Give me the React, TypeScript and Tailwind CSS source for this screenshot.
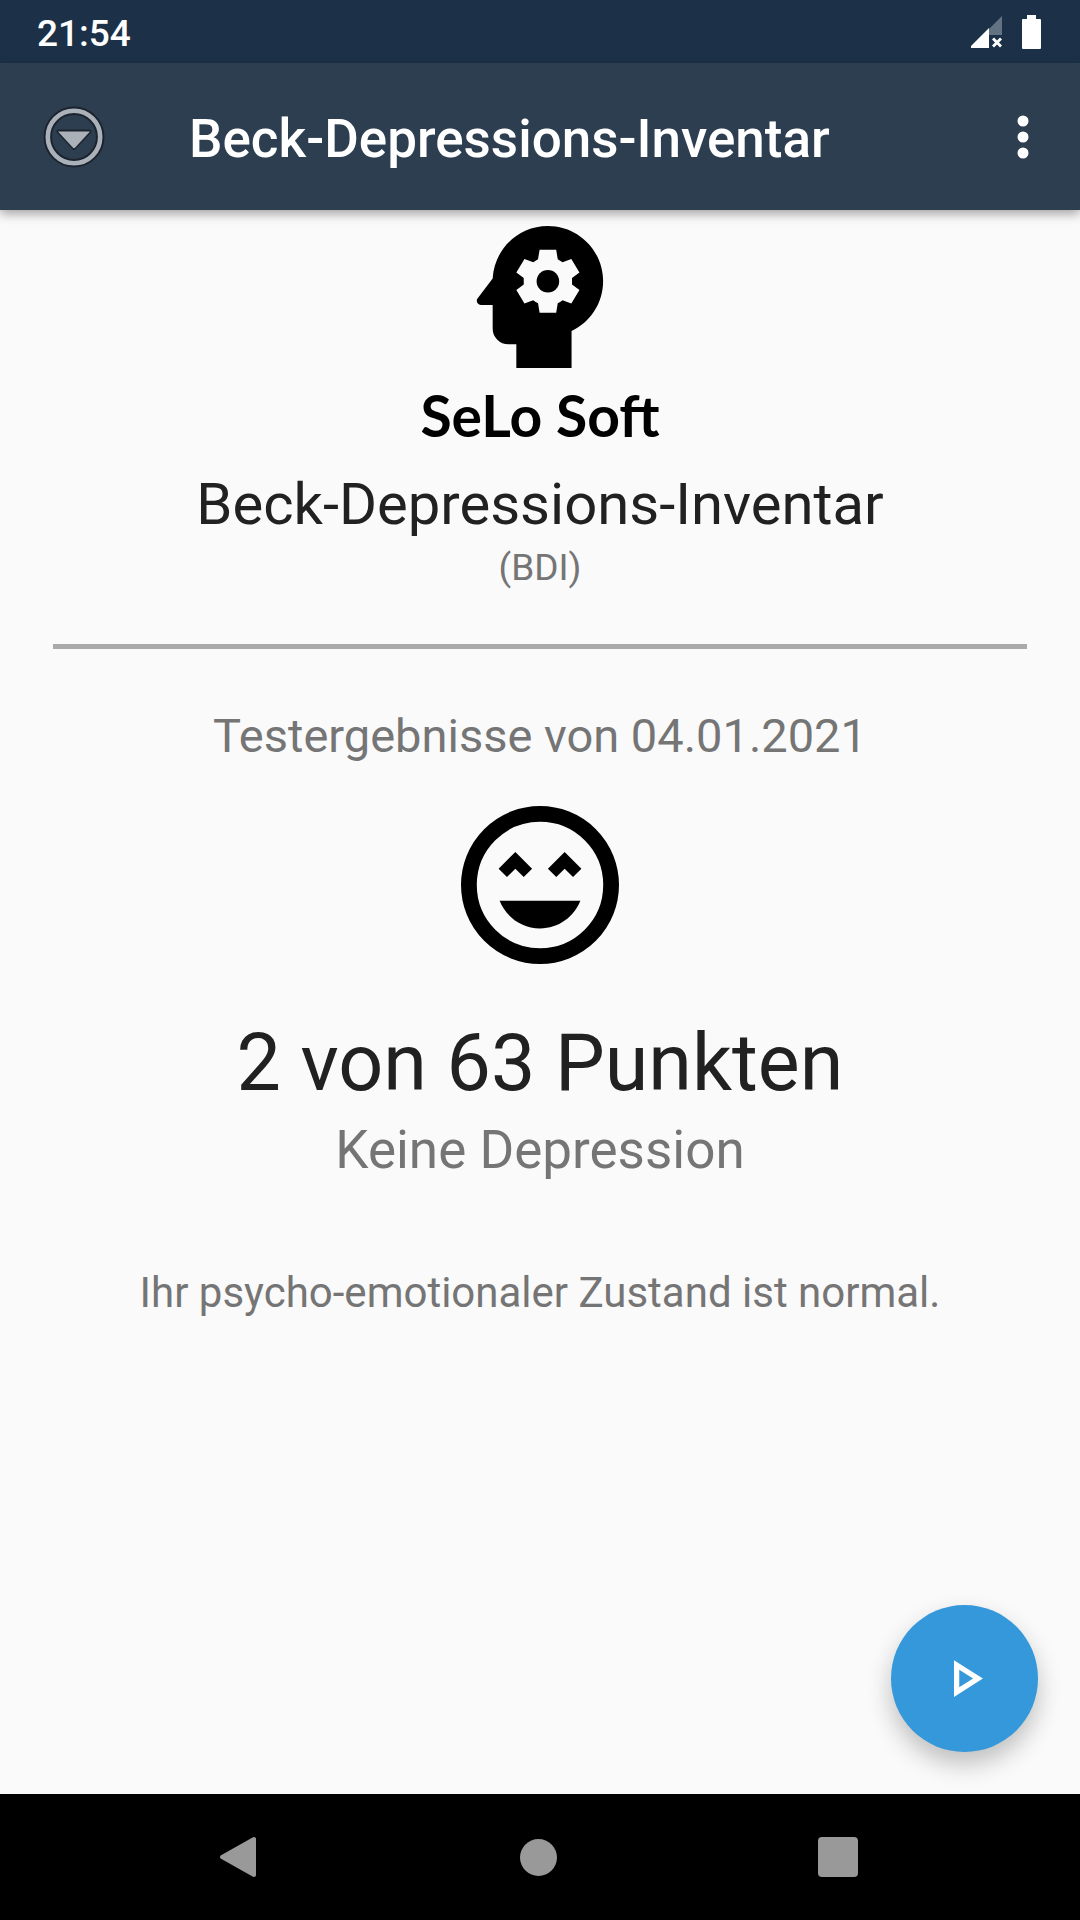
function SignalIcon() {
  return (
    <svg width="32" height="34" viewBox="0 0 32 34" aria-hidden="true">
      <path d="M31 1v19H12z" fill="#637282" />
      <path d="M18 13v20H0v-2z" fill="#fff" />
      <path d="M18 20h13v13H18z" fill="#1c3147" />
      <path
        d="M22 23.5l8 8M30 23.5l-8 8"
        stroke="#fff"
        strokeWidth="2.8"
        fill="none"
      />
    </svg>
  );
}

function BatteryIcon() {
  return (
    <svg width="19" height="34" viewBox="0 0 19 34" aria-hidden="true">
      <path
        d="M5 0h9v4h4q1 0 1 1v28q0 1-1 1H1q-1 0-1-1V5q0-1 1-1h4z"
        fill="#fff"
      />
    </svg>
  );
}

function DropIcon() {
  return (
    <svg width="64" height="64" viewBox="0 0 64 64" aria-hidden="true">
      <circle cx="32" cy="32" r="26.2" fill="none" stroke="#1b242e" strokeWidth="8.5" />
      <circle cx="32" cy="32" r="26.2" fill="none" stroke="#abb1b9" strokeWidth="4.6" />
      <path
        d="M16.5 26.5h31L32 43z"
        stroke="#1b242e"
        strokeWidth="4"
        strokeLinejoin="round"
      />
      <path d="M16 26.5h32L33 42.8q-1 .8-2 0z" fill="#abb1b9" />
    </svg>
  );
}

function HeadIcon() {
  return (
    <svg width="142" height="142" viewBox="3 3 18 18" aria-hidden="true">
      <path d="M13 3C9.23 3 6.19 5.95 6 9.66l-1.92 2.53c-.24.31 0 .81.42.81H6v3a2 2 0 0 0 2 2h1v3h7v-4.69c2.37-1.12 4-3.51 4-6.31 0-3.86-3.12-7-7-7" />
      <g transform="translate(13 10)">
        <path
          d="M-1.05-4H1.05L1.25-2.8Q1.55-2.65 1.86-2.4L2.97-2.83 4-1.12 3.06-.4V.4L4 1.12 2.97 2.83 1.86 2.4Q1.55 2.65 1.25 2.8L1.05 4H-1.05L-1.25 2.8Q-1.55 2.65-1.86 2.4L-2.97 2.83-4 1.12-3.06.4V-.4L-4-1.12-2.97-2.83-1.86-2.4Q-1.55-2.65-1.25-2.8z"
          fill="#fafafa"
        />
        <circle r="1.43" />
      </g>
    </svg>
  );
}

function SmileIcon() {
  return (
    <svg
      width="158"
      height="158"
      viewBox="2 2 20 20"
      role="img"
      aria-label="Keine Depression"
    >
      <circle cx="12" cy="12" r="9" fill="none" stroke="#000" strokeWidth="2" />
      <path d="M8.88 7.82 11 9.94 9.94 11 8.88 9.94 7.82 11 6.76 9.94z" />
      <path d="M15.12 7.82 13 9.94 14.06 11l1.06-1.06L16.18 11l1.06-1.06z" />
      <path d="M6.89 14c.8 2.04 2.78 3.5 5.11 3.5s4.31-1.46 5.11-3.5z" />
    </svg>
  );
}

export default function App() {
  return (
    <div className="flex min-h-screen flex-col bg-[#fafafa] font-['Roboto',sans-serif]">
      <div className="flex h-[63px] items-center bg-[#1c3147] pr-[39px] pl-[37px] text-white">
        <span className="grow pt-1 text-[37px] leading-[44px] font-medium">
          21:54
        </span>
        <div className="flex items-center gap-[19px]">
          <SignalIcon />
          <BatteryIcon />
        </div>
      </div>

      <header className="z-10 flex h-[147px] items-center bg-[#2d3e50] pr-[41px] pl-[42px] text-white shadow-[0_4px_10px_rgba(0,0,0,0.35)]">
        <button type="button" aria-label="Menü" className="cursor-pointer">
          <DropIcon />
        </button>
        <h1 className="ml-[83px] grow pt-1 text-[53px] leading-[62px] font-medium">
          Beck-Depressions-Inventar
        </h1>
        <button type="button" aria-label="Weitere Optionen" className="cursor-pointer">
          <svg width="32" height="44" viewBox="0 0 32 44" fill="#fff">
            <circle cx="16" cy="6" r="5.5" />
            <circle cx="16" cy="22" r="5.5" />
            <circle cx="16" cy="38" r="5.5" />
          </svg>
        </button>
      </header>

      <main className="relative flex grow flex-col items-center pt-4 text-center text-[#757575]">
        <HeadIcon />
        <p className="mt-[15px] font-['Lato',sans-serif] text-[57px] leading-[64px] font-bold text-black">
          SeLo Soft
        </p>
        <h2 className="mt-[23px] text-[58px] leading-[68px] text-[#212121]">
          Beck-Depressions-Inventar
        </h2>
        <p className="mt-2 text-[37px] leading-[44px]">(BDI)</p>

        <div className="w-full px-[53px] pt-[54px]">
          <hr className="h-[5px] border-0 bg-[#aaaaaa]" />
        </div>

        <p className="mt-[59px] mb-[42px] text-[47px] leading-[56px]">
          Testergebnisse von 04.01.2021
        </p>
        <SmileIcon />
        <p className="mt-[53px] text-[79px] leading-[92px] text-[#212121]">
          2 von 63 Punkten
        </p>
        <p className="mt-[10px] text-[53px] leading-[62px]">Keine Depression</p>
        <p className="mt-[87px] text-[42px] leading-[50px]">
          Ihr psycho-emotionaler Zustand ist normal.
        </p>

        <button
          type="button"
          aria-label="Test starten"
          className="absolute right-[42px] bottom-[42px] flex size-[147px] cursor-pointer items-center justify-center rounded-full bg-[#3498db] shadow-[0_12px_24px_rgba(0,0,0,0.24)]"
        >
          <svg width="63" height="63" viewBox="0 0 24 24" fill="#fff">
            <path d="M10 8.64 15.27 12 10 15.36zM8 5v14l11-7z" />
          </svg>
        </button>
      </main>

      <nav className="flex h-[126px] items-center bg-black pr-[92px] pl-[88px]">
        <button type="button" aria-label="Zurück" className="flex flex-1 cursor-pointer justify-center">
          <svg width="44" height="44" viewBox="0 0 44 44">
            <path
              d="M38 4v36L6 22z"
              fill="#999"
              stroke="#999"
              strokeWidth="4"
              strokeLinejoin="round"
            />
          </svg>
        </button>
        <button type="button" aria-label="Startseite" className="flex flex-1 cursor-pointer justify-center">
          <span className="size-[37px] rounded-full bg-[#999999]" />
        </button>
        <button type="button" aria-label="Übersicht" className="flex flex-1 cursor-pointer justify-center">
          <span className="size-10 rounded bg-[#999999]" />
        </button>
      </nav>
    </div>
  );
}
